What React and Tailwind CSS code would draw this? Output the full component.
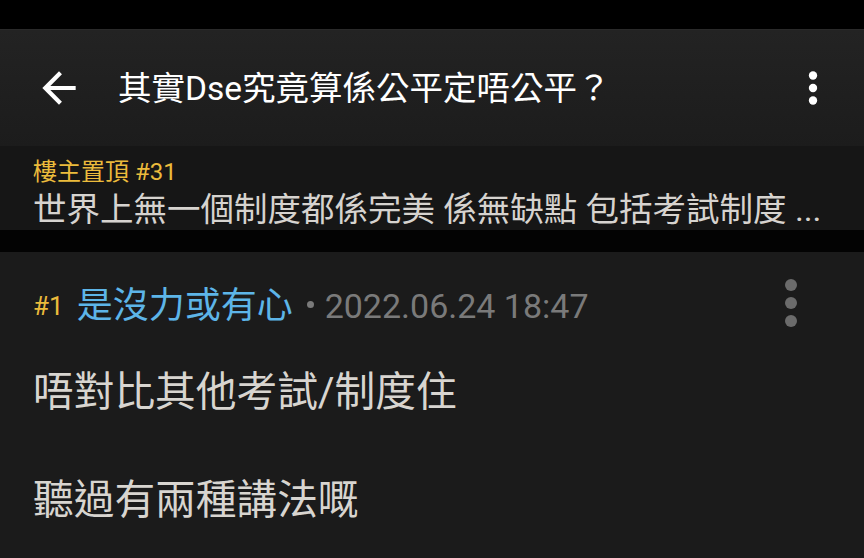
import React from "react";

const FONT = { fontFamily: 'Roboto, "Noto Sans CJK TC", sans-serif' };

function ArrowBack({ className }) {
  return (
    <svg viewBox="0 0 24 24" className={className} fill="currentColor">
      <path d="M20 11H7.83l5.59-5.59L12 4l-8 8 8 8 1.41-1.41L7.83 13H20v-2z" />
    </svg>
  );
}

function MoreVert({ className }) {
  return (
    <svg viewBox="0 0 24 24" className={className} fill="currentColor">
      <circle cx="12" cy="6" r="2" />
      <circle cx="12" cy="12" r="2" />
      <circle cx="12" cy="18" r="2" />
    </svg>
  );
}

export default function App() {
  return (
    <div className="w-[864px] h-[558px] overflow-hidden bg-[#1b1b1b] flex flex-col" style={FONT}>
      <div className="h-[29px] bg-black shrink-0" />
      <header className="h-[117px] shrink-0 flex items-center bg-gradient-to-b from-[#232323] to-[#1c1c1c] border-t border-[#2a2a2a]">
        <div className="pl-[34px] flex items-center">
          <ArrowBack className="w-[50px] h-[50px] text-white" />
        </div>
        <h1 className="ml-[34px] mt-[2px] text-[33.5px] leading-[40px] text-white flex-1 whitespace-nowrap">
          其實Dse究竟算係公平定唔公平？
        </h1>
        <div className="pr-[26px]">
          <MoreVert className="w-[50px] h-[50px] text-white" />
        </div>
      </header>
      <section className="h-[84px] shrink-0 bg-[#161616] px-[33px] flex flex-col">
        <div className="mt-[12px] text-[24px] leading-[28px] text-[#ebbb3c] whitespace-nowrap">樓主置頂 #31</div>
        <div className="mt-[4px] text-[33.5px] leading-[40px] text-[#d6d3cf] whitespace-nowrap">
          世界上無一個制度都係完美 係無缺點 包括考試制度 ...
        </div>
      </section>
      <div className="h-[22px] shrink-0 bg-[#030303]" />
      <main className="flex-1 bg-[#1b1b1b]">
        <div className="mt-[15px] h-[72px] flex items-center justify-between pl-[33px] pr-[37px]">
          <div className="flex items-center whitespace-nowrap pt-[6px]">
            <span className="text-[26px] leading-[40px] text-[#ebbb3c]">#1</span>
            <span className="ml-[13px] text-[36px] leading-[44px] text-[#5db5e8]">是沒力或有心</span>
            <span className="ml-[14px] w-[7px] h-[7px] rounded-full bg-[#7a7a7a] -mt-[4px]" />
            <span className="ml-[11px] text-[34px] leading-[44px] text-[#7a7a7a]">2022.06.24 18:47</span>
          </div>
          <MoreVert className="w-[72px] h-[72px] text-[#6b6b6b]" />
        </div>
        <div className="mt-[26px] px-[33px] text-[40.7px] leading-[54px] text-[#d8d5d0]">
          <p>唔對比其他考試/制度住</p>
          <p className="h-[54px]"></p>
          <p>聽過有兩種講法嘅</p>
        </div>
      </main>
    </div>
  );
}
